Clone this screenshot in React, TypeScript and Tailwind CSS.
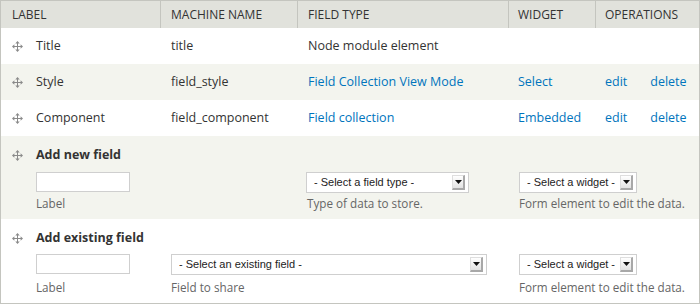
import React from "react";

const COLS = "grid grid-cols-[159px_137px_211px_87px_1fr]";

function Handle() {
  return (
    <svg width="11" height="11" viewBox="0 0 11 11" className="shrink-0">
      <g fill="#8a8a8a" stroke="none">
        <rect x="5" y="2" width="1" height="7" />
        <rect x="2" y="5" width="7" height="1" />
        <polygon points="5.5,0 3.3,2.4 7.7,2.4" />
        <polygon points="5.5,11 3.3,8.6 7.7,8.6" />
        <polygon points="0,5.5 2.4,3.3 2.4,7.7" />
        <polygon points="11,5.5 8.6,3.3 8.6,7.7" />
      </g>
    </svg>
  );
}

function Select({ text, width }: { text: string; width: string }) {
  return (
    <div
      className={`${width} h-[21px] flex items-center border border-[#cfcfcf] bg-white font-['Liberation_Sans',Arial,sans-serif] text-[11px] text-[#222] pl-[7px] pr-[3px]`}
    >
      <span className="truncate">{text}</span>
      <div className="ml-auto w-[13px] h-[15px] shrink-0 flex items-center justify-center bg-gradient-to-b from-white to-[#e2e2e2] border-l border-t border-l-[#dedede] border-t-[#dedede] border-r-2 border-b-2 border-r-[#a8a8a8] border-b-[#a8a8a8]">
        <svg width="7" height="4" viewBox="0 0 7 4">
          <polygon points="0,0 7,0 3.5,4" fill="#111" />
        </svg>
      </div>
    </div>
  );
}

function TextInput() {
  return <div className="w-[94px] h-[20px] border border-[#cfcfcf] bg-white ml-[35px]" />;
}

function Desc({ children, className = "" }: { children: React.ReactNode; className?: string }) {
  return <div className={`text-[11.7px] leading-[16px] text-[#666] ${className}`}>{children}</div>;
}

type Row = {
  label: string;
  machine: string;
  type: string;
  typeLink?: boolean;
  widget?: string;
  ops?: boolean;
  striped?: boolean;
};

const rows: Row[] = [
  { label: "Title", machine: "title", type: "Node module element" },
  { label: "Style", machine: "field_style", type: "Field Collection View Mode", typeLink: true, widget: "Select", ops: true, striped: true },
  { label: "Component", machine: "field_component", type: "Field collection", typeLink: true, widget: "Embedded", ops: true },
];

export default function App() {
  const link = "text-[#0074bd]";
  return (
    <div className="w-[700px] h-[304px] border border-[#c4c5bf] bg-white font-['Open_Sans',sans-serif] text-[12.5px] text-[#333] box-border">
      <div className={`${COLS} h-[27px] bg-[#e1e2dc] text-[12px] text-[#333]`}>
        <div className="flex items-center pl-[11px]">LABEL</div>
        <div className="flex items-center pl-[10px] border-l border-[#c4c5bf]">MACHINE NAME</div>
        <div className="flex items-center pl-[10px] border-l border-[#c4c5bf]">FIELD TYPE</div>
        <div className="flex items-center pl-[9px] border-l border-[#c4c5bf]">WIDGET</div>
        <div className="flex items-center pl-[9px] border-l border-[#c4c5bf]">OPERATIONS</div>
      </div>

      {rows.map((r) => (
        <div key={r.label} className={`${COLS} h-[36px] items-center ${r.striped ? "bg-[#f3f4ee]" : "bg-white"}`}>
          <div className="flex items-center pl-[11px] gap-[13px]">
            <Handle />
            <span>{r.label}</span>
          </div>
          <div className="pl-[11px]">{r.machine}</div>
          <div className={`pl-[11px] ${r.typeLink ? link : ""}`}>{r.type}</div>
          <div className={`pl-[10px] ${link}`}>{r.widget ?? ""}</div>
          <div className={`pl-[10px] flex gap-[23px] ${link}`}>
            {r.ops && (
              <>
                <span>edit</span>
                <span>delete</span>
              </>
            )}
          </div>
        </div>
      ))}

      <div className="h-[83px] bg-[#f3f4ee] pt-[10px]">
        <div className="flex items-center h-[18px] pl-[11px] gap-[13px]">
          <Handle />
          <span className="font-bold">Add new field</span>
        </div>
        <div className={`${COLS} mt-[8px]`}>
          <div>
            <TextInput />
            <Desc className="mt-[3px] pl-[35px]">Label</Desc>
          </div>
          <div />
          <div className="pl-[9px]">
            <Select text="- Select a field type -" width="w-[163px]" />
            <Desc className="mt-[2px] pl-[1px]">Type of data to store.</Desc>
          </div>
          <div className="col-span-2 pl-[11px]">
            <Select text="- Select a widget -" width="w-[118px]" />
            <Desc className="mt-[2px]">Form element to edit the data.</Desc>
          </div>
        </div>
      </div>

      <div className="h-[83px] bg-white pt-[10px]">
        <div className="flex items-center h-[18px] pl-[11px] gap-[13px]">
          <Handle />
          <span className="font-bold">Add existing field</span>
        </div>
        <div className={`${COLS} mt-[7px]`}>
          <div>
            <TextInput />
            <Desc className="mt-[5px] pl-[35px]">Label</Desc>
          </div>
          <div className="col-span-2 pl-[11px]">
            <Select text="- Select an existing field -" width="w-[316px]" />
            <Desc className="mt-[4px]">Field to share</Desc>
          </div>
          <div className="col-span-2 pl-[11px]">
            <Select text="- Select a widget -" width="w-[118px]" />
            <Desc className="mt-[4px]">Form element to edit the data.</Desc>
          </div>
        </div>
      </div>
    </div>
  );
}
